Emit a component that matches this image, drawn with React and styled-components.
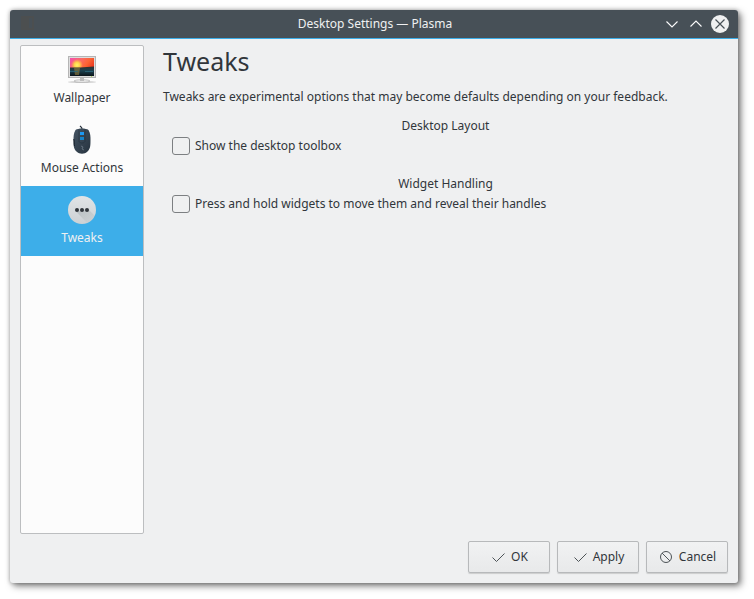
import React from "react";
import styled, { createGlobalStyle } from "styled-components";

const GlobalStyle = createGlobalStyle`
  * { box-sizing: border-box; }
  body {
    margin: 0;
    background: #ffffff;
    color: #31363b;
    font: 12px/20px "Noto Sans", "Open Sans", sans-serif;
  }
  button, input { font: inherit; color: inherit; }
`;

const Desktop = styled.div`
  display: flex;
  min-height: 100vh;
  padding: 10px 16px 16px 10px;
`;

const Window = styled.section`
  flex: 1;
  min-width: 0;
  display: flex;
  flex-direction: column;
  background: #eff0f1;
  border-radius: 3px;
  box-shadow: 3px 3px 7px rgba(0, 0, 0, 0.5), 0 0 4px rgba(0, 0, 0, 0.3);
`;

const TitleBar = styled.header`
  display: grid;
  grid-template-columns: 1fr auto 1fr;
  align-items: center;
  height: 29px;
  padding: 0 8px 0 10px;
  background: #475057;
  border-bottom: 1px solid #3daee9;
  border-radius: 3px 3px 0 0;
  color: #eff0f1;
`;

const WindowTitle = styled.h1`
  margin: 0;
  font-size: 12px;
  font-weight: inherit;
  line-height: 20px;
`;

const WindowControls = styled.div`
  display: flex;
  justify-content: flex-end;
  gap: 4px;
`;

const ControlButton = styled.button`
  display: flex;
  width: 20px;
  height: 20px;
  padding: 0;
  border: 0;
  background: none;
`;

const Body = styled.div`
  flex: 1;
  display: flex;
  gap: 19px;
  padding: 6px 10px 7px;
`;

const Sidebar = styled.nav`
  flex: none;
  width: 124px;
  border: 1px solid #bcbec0;
  border-radius: 2px;
  background: #fcfcfc;
`;

const Category = styled.button`
  display: flex;
  flex-direction: column;
  align-items: center;
  gap: 2px;
  width: 100%;
  height: 70px;
  padding: 8px 0;
  border: 0;
  background: ${(p) => (p.$selected ? "#3daee9" : "transparent")};
  color: ${(p) => (p.$selected ? "#eff0f1" : "#31363b")};
`;

const Content = styled.main`
  flex: 1;
  min-width: 0;
`;

const PageTitle = styled.h2`
  margin: 0;
  font-size: 25px;
  font-weight: inherit;
  line-height: 32px;
`;

const Intro = styled.p`
  margin: 10px 0 9px;
`;

const Group = styled.fieldset`
  min-width: 0;
  margin: 0 0 18px;
  padding: 0;
  border: 0;
`;

const GroupTitle = styled.legend`
  width: 100%;
  padding: 0;
  text-align: center;
`;

const Option = styled.label`
  display: flex;
  align-items: center;
  gap: 5px;
  padding-left: 9px;
`;

const CheckBox = styled.input`
  appearance: none;
  flex: none;
  width: 18px;
  height: 18px;
  margin: 0;
  border: 1px solid #7c7f82;
  border-radius: 3px;
  &:checked { background: #3daee9; }
`;

const Footer = styled.footer`
  display: flex;
  justify-content: flex-end;
  gap: 7px;
  padding: 0 10px 10px;
`;

const DialogButton = styled.button`
  display: flex;
  align-items: center;
  justify-content: center;
  gap: 5px;
  width: 82px;
  height: 32px;
  padding: 0 10px;
  border: 1px solid #b7b9bb;
  border-radius: 2px;
  background: linear-gradient(#f1f2f3, #e8e9ea);
  box-shadow: 0 1px 1px rgba(0, 0, 0, 0.15);
`;

const AppIcon = () => (
  <svg width="16" height="16" viewBox="0 0 16 16" aria-hidden="true">
    <rect x="2" y="1" width="11" height="12" fill="none" stroke="#4c4f50" strokeWidth="2" />
    <rect x="3" y="2" width="6" height="10" fill="#4c4f50" />
  </svg>
);

const Chevron = ({ up }) => (
  <svg width="20" height="20" viewBox="0 0 20 20" fill="none" stroke="#fcfcfc" strokeWidth="1.1" aria-hidden="true">
    <path d={up ? "M4.5 12.5 10 7l5.500 5.500" : "M4.500 7.500 10 13l5.500-5.500"} />
  </svg>
);

const CloseIcon = () => (
  <svg width="20" height="20" viewBox="0 0 20 20" aria-hidden="true">
    <circle cx="10" cy="10" r="9" fill="#eff0f1" />
    <path d="m5.500 5.500 9 9m0-9-9 9" fill="none" stroke="#475057" strokeWidth="1.200" />
  </svg>
);

const WallpaperIcon = () => (
  <svg width="32" height="32" viewBox="0 0 32 32" aria-hidden="true">
    <defs>
      <linearGradient id="sky" x1="0" y1="0" x2="1" y2=".6">
        <stop offset="0" stopColor="#f44fb0" />
        <stop offset=".4" stopColor="#fb6a62" />
        <stop offset=".65" stopColor="#fb6434" />
        <stop offset="1" stopColor="#e72a18" />
      </linearGradient>
      <linearGradient id="sea" x1="0" y1="0" x2="0" y2="1">
        <stop offset="0" stopColor="#33302c" />
        <stop offset=".45" stopColor="#1b4150" />
        <stop offset="1" stopColor="#0c1419" />
      </linearGradient>
      <radialGradient id="sun">
        <stop offset="0" stopColor="#fff36a" />
        <stop offset=".45" stopColor="#ffd34a" />
        <stop offset="1" stopColor="#ffb347" stopOpacity="0" />
      </radialGradient>
    </defs>
    <ellipse cx="16" cy="28" rx="14" ry="1" fill="#cfcfcf" />
    <ellipse cx="16" cy="27" rx="8" ry="1.300" fill="#eeeeee" stroke="#a5a5a5" strokeWidth=".6" />
    <path d="M14 23h4v4h-4z" fill="#bdbdbd" />
    <rect x="2.500" y="2.500" width="27" height="21" fill="#dedede" stroke="#b5b5b5" />
    <rect x="4" y="4" width="24" height="18" fill="url(#sky)" />
    <circle cx="11" cy="11" r="6" fill="url(#sun)" />
    <path d="M4 13.500h10l14-1v9.500H4z" fill="url(#sea)" />
    <path d="M8 14h6l-1 7H9z" fill="#a88a3a" opacity=".5" />
    <path d="M4 17.500h8m7 0h8" stroke="#2b6a7d" strokeWidth=".8" />
    <circle cx="25.500" cy="22.500" r=".6" fill="#a9e04a" />
  </svg>
);

const MouseIcon = () => (
  <svg width="32" height="32" viewBox="0 0 32 32" aria-hidden="true">
    <defs>
      <linearGradient id="shell" x1="0" y1="0" x2="1" y2="1">
        <stop offset="0" stopColor="#455463" />
        <stop offset="1" stopColor="#26333f" />
      </linearGradient>
    </defs>
    <path d="M16 5C16 3 15 3 14 2" fill="none" stroke="#26303b" strokeWidth="1.200" />
    <path d="M9.500 6C12 4 20 4 22.500 6c2 3 2 7 2 10 0 5 0 9-3 11.500-3 3-8 3-11 0C7.500 25 7.500 21 7.500 16c0-3 0-7 2-10z" fill="url(#shell)" />
    <path d="M13 5.500v12c1 2 5 2 6 0v-12" fill="none" stroke="#22303c" strokeWidth=".6" />
    <path d="M14 8h4v3h-4z" fill="#1d99f3" />
    <path d="M14 13h4v3h-4z" fill="#1683c9" />
    <path d="M7.800 15c.7 3 .2 5 .7 7" fill="none" stroke="#16202a" />
    <path d="m15 22 2 1-1 2 2 1" fill="none" stroke="#6d7a86" strokeWidth=".8" />
  </svg>
);

const TweaksIcon = () => (
  <svg width="32" height="32" viewBox="0 0 32 32" aria-hidden="true">
    <defs>
      <linearGradient id="disc" x1="0" y1="0" x2="0" y2="1">
        <stop offset="0" stopColor="#e1e4e6" />
        <stop offset="1" stopColor="#cdd1d4" />
      </linearGradient>
      <linearGradient id="cast" x1="0" y1="0" x2=".6" y2="1">
        <stop offset="0" stopColor="#7f8c8d" stopOpacity=".35" />
        <stop offset="1" stopColor="#7f8c8d" stopOpacity="0" />
      </linearGradient>
      <clipPath id="discClip"><circle cx="16" cy="16" r="14" /></clipPath>
    </defs>
    <circle cx="16" cy="16" r="14" fill="url(#disc)" />
    <path d="m10 17.500 12-2.500 10 10v7h-8z" fill="url(#cast)" clipPath="url(#discClip)" />
    <g fill="#31363b">
      <circle cx="11" cy="16" r="2" />
      <circle cx="16" cy="16" r="2" />
      <circle cx="21" cy="16" r="2" />
    </g>
  </svg>
);

const CheckIcon = () => (
  <svg width="16" height="16" viewBox="0 0 16 16" fill="none" stroke="#4d5357" strokeWidth="1" aria-hidden="true">
    <path d="m2.500 8.500 4 4 8-8" />
  </svg>
);

const CancelIcon = () => (
  <svg width="16" height="16" viewBox="0 0 16 16" fill="none" stroke="#4d5357" strokeWidth="1" aria-hidden="true">
    <circle cx="8" cy="8" r="5.500" />
    <path d="m4 4 8 8" />
  </svg>
);

const categories = [
  { name: "Wallpaper", Icon: WallpaperIcon },
  { name: "Mouse Actions", Icon: MouseIcon },
  { name: "Tweaks", Icon: TweaksIcon, selected: true },
];

const groups = [
  { title: "Desktop Layout", option: "Show the desktop toolbox" },
  { title: "Widget Handling", option: "Press and hold widgets to move them and reveal their handles" },
];

export default function App() {
  return (
    <Desktop>
      <GlobalStyle />
      <Window>
        <TitleBar>
          <AppIcon />
          <WindowTitle>Desktop Settings — Plasma</WindowTitle>
          <WindowControls>
            <ControlButton aria-label="Minimize"><Chevron /></ControlButton>
            <ControlButton aria-label="Maximize"><Chevron up /></ControlButton>
            <ControlButton aria-label="Close"><CloseIcon /></ControlButton>
          </WindowControls>
        </TitleBar>
        <Body>
          <Sidebar>
            {categories.map(({ name, Icon, selected }) => (
              <Category key={name} $selected={selected} aria-current={selected ? "page" : undefined}>
                <Icon />
                {name}
              </Category>
            ))}
          </Sidebar>
          <Content>
            <PageTitle>Tweaks</PageTitle>
            <Intro>Tweaks are experimental options that may become defaults depending on your feedback.</Intro>
            {groups.map(({ title, option }) => (
              <Group key={title}>
                <GroupTitle>{title}</GroupTitle>
                <Option>
                  <CheckBox type="checkbox" />
                  {option}
                </Option>
              </Group>
            ))}
          </Content>
        </Body>
        <Footer>
          <DialogButton><CheckIcon />OK</DialogButton>
          <DialogButton><CheckIcon />Apply</DialogButton>
          <DialogButton><CancelIcon />Cancel</DialogButton>
        </Footer>
      </Window>
    </Desktop>
  );
}
